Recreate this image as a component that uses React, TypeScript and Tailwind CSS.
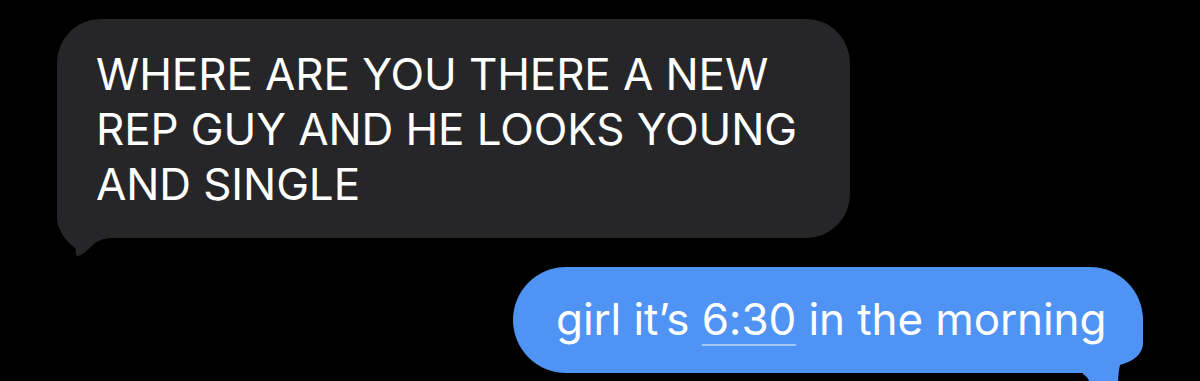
import React from "react";

function GrayTail() {
  return (
    <svg className="absolute left-0 top-[160px]" width="60" height="80" viewBox="0 0 60 80">
      <path
        d="M0 0 L0 40 C1 52 9 62 18 69 C20 72 17 77 21 77 C26 76 30 71 36 66 C40 62 45 60 52 59 L52 0 Z"
        fill="#262628"
      />
    </svg>
  );
}

function BlueTail() {
  return (
    <svg className="absolute right-0 top-[50px]" width="60" height="76" viewBox="0 0 60 76">
      <path
        d="M60 0 L60 26 C60 36 52 44 37 48 C35 56 35 66 35 76 L10 76 C8 66 5 60 0 57 L0 0 Z"
        fill="#4f93f5"
      />
    </svg>
  );
}

export default function App() {
  return (
    <div
      className="w-[1200px] h-[381px] bg-black overflow-hidden flex flex-col"
      style={{ fontFamily: "Inter, 'Liberation Sans', sans-serif" }}
    >
      <div className="pl-[57px] pt-[19px]">
        <div className="relative w-[793px] h-[219px] rounded-[44px] bg-[#262628] pl-[39px] pt-[28px]">
          <GrayTail />
          <p className="relative text-white text-[44px] leading-[55px] tracking-[-0.1px]">
            WHERE ARE YOU THERE A NEW
            <br />
            REP GUY AND HE LOOKS YOUNG
            <br />
            AND SINGLE
          </p>
        </div>
      </div>
      <div className="flex justify-end pr-[57px] pt-[29px]">
        <div className="relative h-[106px] w-[630px] rounded-[53px] bg-[#4f93f5] flex items-center pl-[43px] pb-[3px]">
          <BlueTail />
          <p className="relative text-white text-[44px] leading-none tracking-[-0.1px]">
            girl it’s{" "}
            <span className="underline decoration-[#a3c6fa] decoration-2 underline-offset-[9px]">6:30</span>{" "}
            in the morning
          </p>
        </div>
      </div>
    </div>
  );
}
